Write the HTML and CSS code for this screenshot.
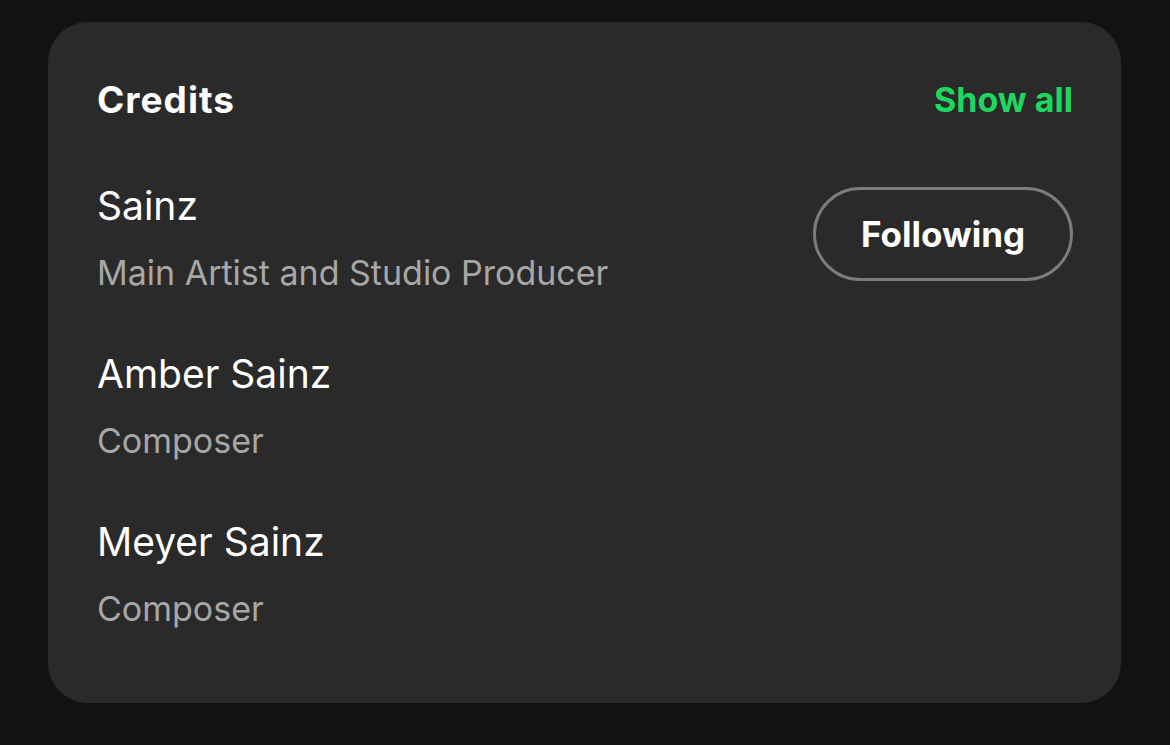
FILE: index.html
```html
<!DOCTYPE html>
<html lang="en">
<head>
<meta charset="utf-8">
<title>Credits</title>
<link rel="stylesheet" href="styles.css">
</head>
<body>
<section class="card">
  <header class="card-header">
    <h2 class="title">Credits</h2>
    <a class="show-all" href="#">Show all</a>
  </header>
  <ul class="credits">
    <li class="credit">
      <div class="credit-info">
        <div class="name">Sainz</div>
        <div class="role">Main Artist and Studio Producer</div>
      </div>
      <button class="follow-btn" type="button">Following</button>
    </li>
    <li class="credit">
      <div class="credit-info">
        <div class="name">Amber Sainz</div>
        <div class="role">Composer</div>
      </div>
    </li>
    <li class="credit">
      <div class="credit-info">
        <div class="name">Meyer Sainz</div>
        <div class="role">Composer</div>
      </div>
    </li>
  </ul>
</section>
</body>
</html>
```

FILE: styles.css
```css
* { box-sizing: border-box; }

html, body {
  margin: 0;
  padding: 0;
  background: #121212;
}

body {
  padding: 22px 49px 42px 48px;
  font-family: "Inter", "Noto Sans", sans-serif;
  color: #ffffff;
}

.card {
  background: #2a2a2a;
  border-radius: 40px;
  height: 681px;
  padding: 56px 48px 0 49px;
}

.card-header {
  display: flex;
  justify-content: space-between;
  align-items: center;
  height: 44px;
}

.title {
  margin: 0;
  font-size: 37px;
  font-weight: 700;
  letter-spacing: 1px;
  line-height: 44px;
}

.show-all {
  color: #1ed760;
  font-size: 34px;
  font-weight: 700;
  text-decoration: none;
  line-height: 44px;
}

.credits {
  list-style: none;
  margin: 0;
  padding: 0;
  margin-top: 62px;
}

.credit {
  display: flex;
  justify-content: space-between;
  align-items: flex-start;
  height: 168px;
}

.credit-info {
  display: flex;
  flex-direction: column;
  gap: 23px;
}

.name {
  font-size: 39px;
  line-height: 44px;
  font-weight: 400;
}

.role {
  font-size: 34px;
  line-height: 44px;
  color: #a7a7a7;
}

.follow-btn {
  margin-top: 3px;
  width: 260px;
  height: 94px;
  border-radius: 47px;
  border: 3px solid #7c7c7c;
  background: transparent;
  color: #ffffff;
  font-family: inherit;
  font-size: 35px;
  font-weight: 700;
}
```
